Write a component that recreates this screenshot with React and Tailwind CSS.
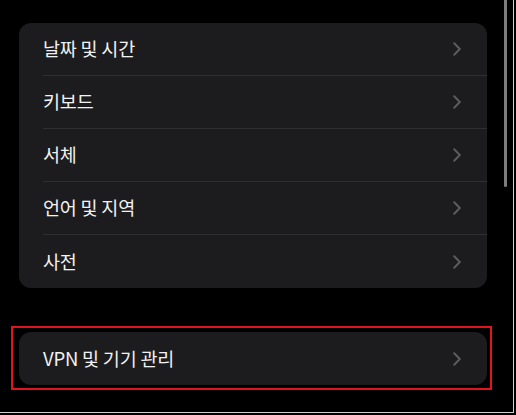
import React from "react";

const Chevron = () => (
  <svg width="8" height="14" viewBox="0 0 8 14" fill="none" className="shrink-0">
    <path d="M1.2 1.2 L6.8 7 L1.2 12.8" stroke="#5b5b5f" strokeWidth="2" strokeLinecap="round" strokeLinejoin="round" />
  </svg>
);

const Row = ({ label, last }) => (
  <div className="flex h-[53px] items-stretch pl-[24px]">
    <div className={`flex flex-1 items-center justify-between pr-[26px] ${last ? "" : "border-b border-[#2f2f31]"}`}>
      <span className="text-[18.5px] tracking-[-0.2px] text-[#f2f2f2]">{label}</span>
      <Chevron />
    </div>
  </div>
);

export default function App() {
  const items = ["날짜 및 시간", "키보드", "서체", "언어 및 지역", "사전"];
  return (
    <div
      className="relative h-[415px] w-[516px] overflow-hidden bg-black"
      style={{ fontFamily: '"Noto Sans CJK KR", "Noto Sans", sans-serif' }}
    >
      <div className="h-[413px] w-[514px] border-b border-r border-[#cfcfcf] pt-[23px]">
        <div className="ml-[19px] w-[468px] overflow-hidden rounded-[12px] bg-[#1c1c1e]">
          {items.map((l, i) => (
            <Row key={l} label={l} last={i === items.length - 1} />
          ))}
        </div>
        <div className="ml-[11px] mt-[38px] w-[481px] border-2 border-[#e0141e] pb-[3px] pl-[6px] pr-[3px] pt-[4px]">
          <div className="w-[468px] rounded-[12px] bg-[#1c1c1e]">
            <Row label="VPN 및 기기 관리" last />
          </div>
        </div>
      </div>
      <div className="absolute left-[504px] top-0 h-[187px] w-[3px] rounded-b-full bg-[#7d7d7d]" />
    </div>
  );
}
